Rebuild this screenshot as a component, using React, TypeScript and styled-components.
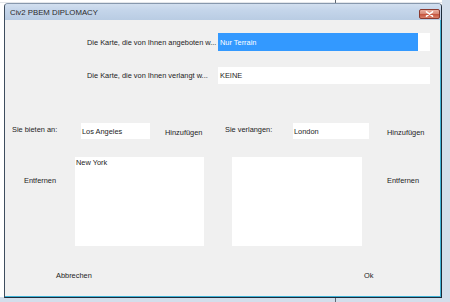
import React from "react";
import styled, { createGlobalStyle } from "styled-components";

const GlobalStyle = createGlobalStyle`
  html, body { margin: 0; padding: 0; }
  body {
    width: 450px;
    height: 302px;
    overflow: hidden;
    font-family: "Liberation Sans", Arial, sans-serif;
    background:
      linear-gradient(to right, transparent 335px, #5f6873 335px, #5f6873 336px, transparent 336px),
      linear-gradient(to right, transparent 442px, #d3deeb 442px),
      linear-gradient(to bottom, transparent 297px, #d3deeb 297px),
      linear-gradient(to bottom, #ffffff 0, #ffffff 2px, #e3e6ea 2px, #e3e6ea 3px, #ffffff 3px);
  }
`;

const Desktop = styled.div`
  width: 450px;
  height: 302px;
  box-sizing: border-box;
  padding: 3px 0 0 4px;
`;

const Window = styled.div`
  width: 438px;
  height: 295px;
  box-sizing: border-box;
  display: flex;
  flex-direction: column;
  border-top: 1px solid #8798ad;
  border-left: 1px solid #3e4d5e;
  border-right: 1px solid #1d2b3a;
  border-bottom: 1px solid #1d2b3a;
  border-radius: 4px 4px 0 0;
  background: #bcd0e6;
  overflow: hidden;
`;

const TitleBar = styled.div`
  height: 16px;
  flex: none;
  display: flex;
  align-items: center;
  justify-content: space-between;
  padding: 0 1px 0 5px;
  background: linear-gradient(to bottom, #d2dfef 0%, #c4d5ea 40%, #b9cce3 100%);
`;

const Title = styled.span`
  font-size: 7.8px;
  color: #2a2a2a;
  margin-top: 1px;
`;

const CloseButton = styled.div`
  width: 21px;
  height: 10px;
  box-sizing: border-box;
  margin-top: 3px;
  border: 1px solid #8a3a30;
  border-radius: 2px;
  background: linear-gradient(to bottom, #eab0a2 0%, #d98a77 45%, #c6553f 55%, #d8806a 100%);
  display: flex;
  align-items: center;
  justify-content: center;
`;

const Client = styled.div`
  flex: 1;
  box-sizing: border-box;
  background: #f0f0f0;
  border-right: 1px solid #3fb2d6;
  border-bottom: 1px solid #3fb2d6;
  padding-top: 13px;
  display: flex;
  flex-direction: column;
  font-size: 7.4px;
  color: #1c1c1c;
`;

const MapRow = styled.div<{ $gap: number; $h: number }>`
  display: flex;
  align-items: center;
  height: ${(p) => p.$h}px;
  margin-top: ${(p) => p.$gap}px;
  padding-left: 82px;
`;

const MapLabel = styled.span`
  width: 131px;
  white-space: nowrap;
  overflow: hidden;
`;

const Field = styled.div<{ $w: number }>`
  width: ${(p) => p.$w}px;
  height: 100%;
  box-sizing: border-box;
  background: #ffffff;
  display: flex;
  align-items: center;
  white-space: nowrap;
  overflow: hidden;
`;

const Selected = styled.span`
  width: 200px;
  height: 100%;
  box-sizing: border-box;
  padding-left: 2px;
  display: flex;
  align-items: center;
  background: #3399ff;
  color: #ffffff;
`;

const FieldText = styled.span<{ $pad: number }>`
  padding-left: ${(p) => p.$pad}px;
`;

const CityRow = styled.div`
  display: grid;
  grid-template-columns: 69px 69px 15px 60px 68px 76px 18px auto;
  align-items: center;
  height: 16px;
  margin-top: 39px;
  padding-left: 7px;
`;

const RowText = styled.span<{ $dy?: number }>`
  white-space: nowrap;
  position: relative;
  top: ${(p) => p.$dy ?? 0}px;
`;

const ListRow = styled.div`
  display: grid;
  grid-template-columns: 51px 129px 28px 130px 25px auto;
  align-items: start;
  height: 89px;
  margin-top: 18px;
  padding-left: 19px;
`;

const SideButton = styled.span`
  margin-top: 19px;
  white-space: nowrap;
`;

const ListBox = styled.div`
  height: 89px;
  background: #ffffff;
  padding: 1px 0 0 1px;
  box-sizing: border-box;
`;

const Footer = styled.div`
  display: grid;
  grid-template-columns: 308px auto;
  margin-top: 25px;
  padding-left: 51px;
`;

const Spacer = styled.span``;

export default function App() {
  return (
    <>
      <GlobalStyle />
      <Desktop>
        <Window>
          <TitleBar>
            <Title>Civ2 PBEM DIPLOMACY</Title>
            <CloseButton>
              <svg width="9" height="6" viewBox="0 0 9 6">
                <path d="M1.5 0.8 L7.5 5.2 M7.5 0.8 L1.5 5.2" stroke="#ffffff" strokeWidth="1.6" strokeLinecap="round" />
              </svg>
            </CloseButton>
          </TitleBar>
          <Client>
            <MapRow $gap={0} $h={18}>
              <MapLabel>Die Karte, die von Ihnen angeboten w...</MapLabel>
              <Field $w={212}>
                <Selected>Nur Terrain</Selected>
              </Field>
            </MapRow>
            <MapRow $gap={16} $h={17}>
              <MapLabel>Die Karte, die von Ihnen verlangt w...</MapLabel>
              <Field $w={212}>
                <FieldText $pad={2}>KEINE</FieldText>
              </Field>
            </MapRow>
            <CityRow>
              <RowText $dy={-2}>Sie bieten an:</RowText>
              <Field $w={69}>
                <FieldText $pad={1}>Los Angeles</FieldText>
              </Field>
              <Spacer />
              <RowText $dy={1}>Hinzufügen</RowText>
              <RowText $dy={-2}>Sie verlangen:</RowText>
              <Field $w={76}>
                <FieldText $pad={1}>London</FieldText>
              </Field>
              <Spacer />
              <RowText $dy={1}>Hinzufügen</RowText>
            </CityRow>
            <ListRow>
              <SideButton>Entfernen</SideButton>
              <ListBox>New York</ListBox>
              <Spacer />
              <ListBox />
              <Spacer />
              <SideButton>Entfernen</SideButton>
            </ListRow>
            <Footer>
              <span>Abbrechen</span>
              <span>Ok</span>
            </Footer>
          </Client>
        </Window>
      </Desktop>
    </>
  );
}
